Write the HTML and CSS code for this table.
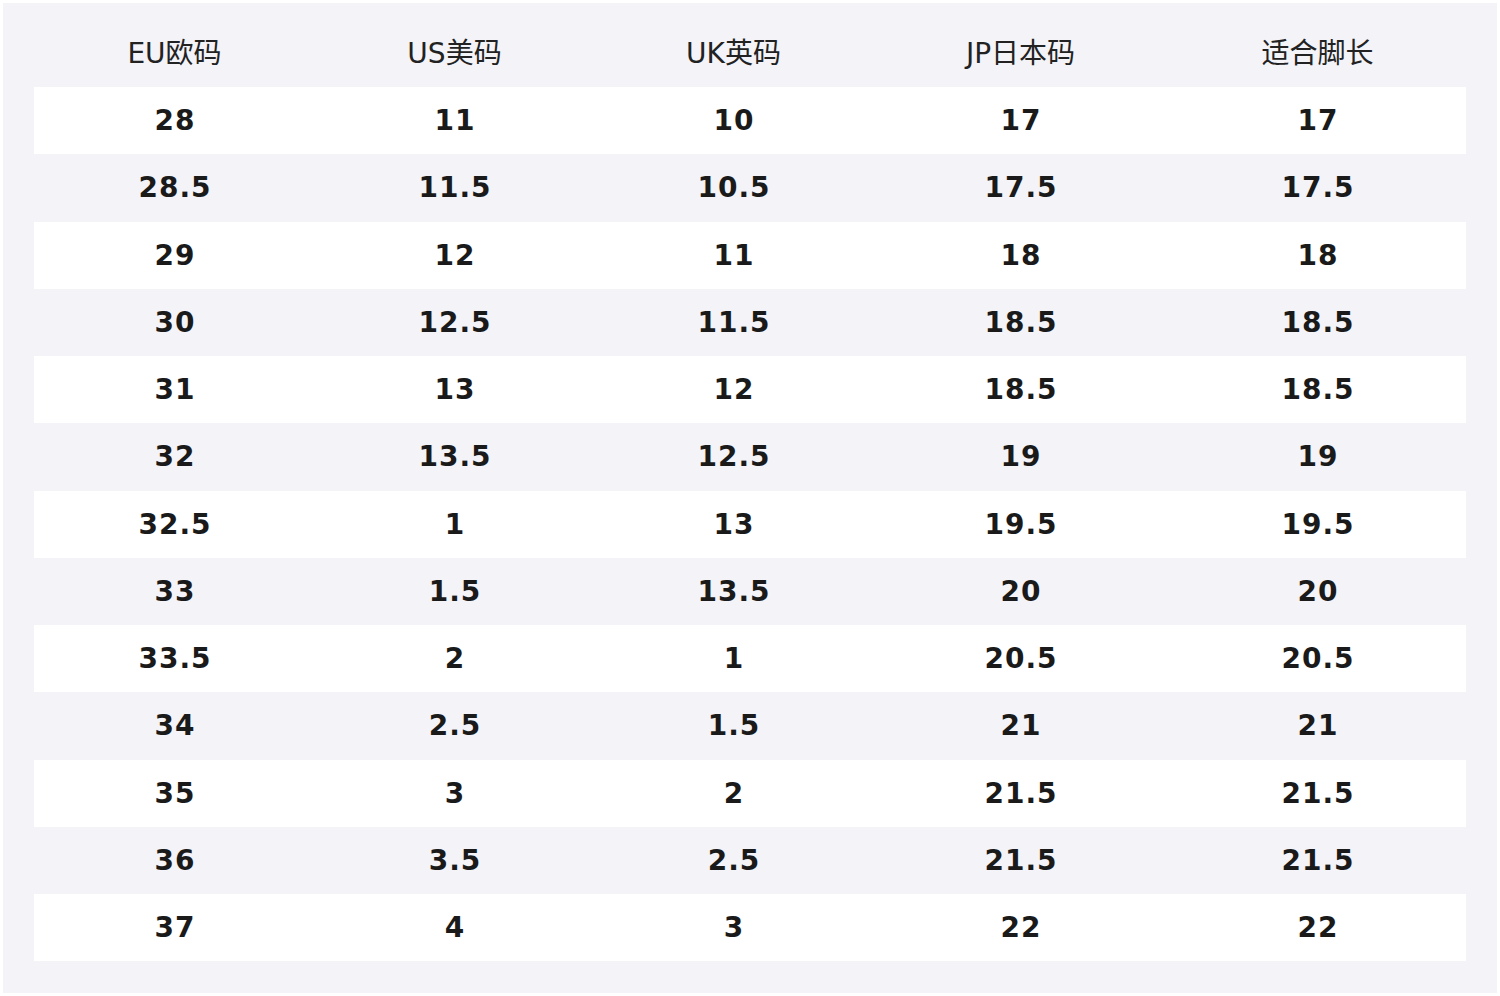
FILE: index.html
```html
<!DOCTYPE html>
<html lang="zh">
<head>
<meta charset="utf-8">
<title>尺码表</title>
<link rel="stylesheet" href="styles.css">
</head>
<body>
<div class="panel">
<table class="size-table">
<colgroup>
<col class="c1"><col class="c2"><col class="c3"><col class="c4"><col class="c5">
</colgroup>
<thead>
<tr><th>EU欧码</th><th>US美码</th><th>UK英码</th><th>JP日本码</th><th>适合脚长</th></tr>
</thead>
<tbody>
<tr><td>28</td><td>11</td><td>10</td><td>17</td><td>17</td></tr>
<tr><td>28.5</td><td>11.5</td><td>10.5</td><td>17.5</td><td>17.5</td></tr>
<tr><td>29</td><td>12</td><td>11</td><td>18</td><td>18</td></tr>
<tr><td>30</td><td>12.5</td><td>11.5</td><td>18.5</td><td>18.5</td></tr>
<tr><td>31</td><td>13</td><td>12</td><td>18.5</td><td>18.5</td></tr>
<tr><td>32</td><td>13.5</td><td>12.5</td><td>19</td><td>19</td></tr>
<tr><td>32.5</td><td>1</td><td>13</td><td>19.5</td><td>19.5</td></tr>
<tr><td>33</td><td>1.5</td><td>13.5</td><td>20</td><td>20</td></tr>
<tr><td>33.5</td><td>2</td><td>1</td><td>20.5</td><td>20.5</td></tr>
<tr><td>34</td><td>2.5</td><td>1.5</td><td>21</td><td>21</td></tr>
<tr><td>35</td><td>3</td><td>2</td><td>21.5</td><td>21.5</td></tr>
<tr><td>36</td><td>3.5</td><td>2.5</td><td>21.5</td><td>21.5</td></tr>
<tr><td>37</td><td>4</td><td>3</td><td>22</td><td>22</td></tr>
</tbody>
</table>
</div>
</body>
</html>
```
FILE: styles.css
```css
html, body {
  margin: 0;
  padding: 0;
  background: #ffffff;
}
body {
  padding: 3px;
  font-family: "DejaVu Sans", "Noto Sans CJK SC", sans-serif;
  color: #1a1a1a;
}
.panel {
  background: #f3f3f8;
  height: 990px;
  box-sizing: border-box;
  padding: 17px 31px 0 31px;
}
.size-table {
  width: 1432px;
  border-collapse: collapse;
  table-layout: fixed;
}
.c1 { width: 280px; }
.c2 { width: 280px; }
.c3 { width: 278px; }
.c4 { width: 296px; }
.c5 { width: 298px; }
.size-table th {
  height: 67px;
  box-sizing: border-box;
  padding: 0 0 5px 1px;
  font-weight: normal;
  font-size: 28px;
  color: #222;
  text-align: center;
  vertical-align: middle;
}
.size-table td {
  height: 67.25px;
  padding: 0 0 0 2px;
  font-weight: bold;
  font-size: 28px;
  letter-spacing: 1px;
  color: #1a1a1a;
  text-align: center;
  vertical-align: middle;
}
.size-table tbody tr:nth-child(odd) {
  background: #ffffff;
}
```
